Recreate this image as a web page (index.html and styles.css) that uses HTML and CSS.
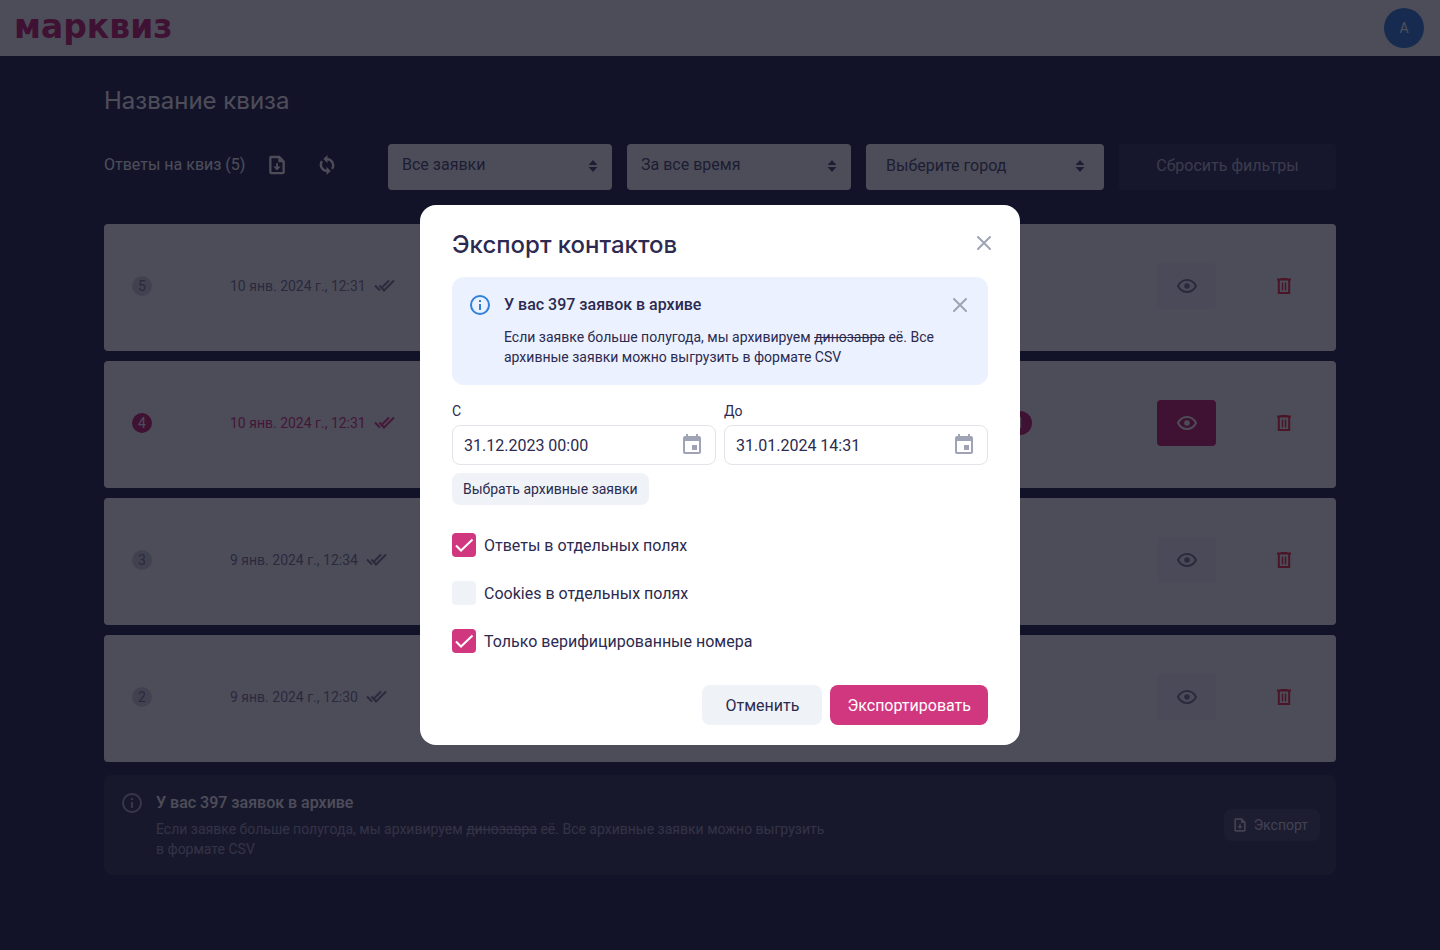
FILE: index.html
```html
<!DOCTYPE html>
<html lang="ru">
<head>
    <meta charset="UTF-8">
    <meta name="viewport" content="width=device-width, initial-scale=1.0">
    <title>Экспорт контактов</title>
    <link rel="stylesheet" href="styles.css">
</head>
<body>
    <!-- icons -->
    <svg class="sprite" aria-hidden="true">
        <symbol id="i-file" viewBox="0 0 24 24"><path fill="currentColor" fill-rule="evenodd" d="M5.500 2H15l5.500 5.500V20a2 2 0 0 1-2 2h-13a2 2 0 0 1-2-2V4a2 2 0 0 1 2-2zm.5 2.500v15h12V9h-4.500V4.500zm5 5.500h2v3.500h3L12 18l-4-4.500h3z"/></symbol>
        <symbol id="i-sync" viewBox="0 0 24 24"><path fill="none" stroke="currentColor" stroke-width="2.500" d="M12 5.500a6.800 6.800 0 0 1 5.500 10.700M12 18.500A6.800 6.800 0 0 1 6.500 7.800"/><path fill="currentColor" d="M12.500 1v9L8 5.500zM11.500 23v-9l4.500 4.500z"/></symbol>
        <symbol id="i-sort" viewBox="0 0 10 14"><path fill="currentColor" d="M5 1l4.500 5h-9zM5 13L.5 8h9z"/></symbol>
        <symbol id="i-checks" viewBox="0 0 21 13"><path fill="none" stroke="currentColor" stroke-width="2" d="M1 6.500l5 5M5.500 6.500l4.500 5L20 1.500M8.500 8l6.500-6.500"/></symbol>
        <symbol id="i-eye" viewBox="0 0 20 14"><path fill="none" stroke="currentColor" stroke-width="2" d="M1 7c2-4 5.300-6 9-6s7 2 9 6c-2 4-5.300 6-9 6S3 11 1 7z"/><circle cx="10" cy="7" r="2.800" fill="currentColor"/></symbol>
        <symbol id="i-trash" viewBox="0 0 16 18"><path fill="none" stroke="currentColor" stroke-width="2" d="M1 2.500h14M2.800 2.500V16h10.400V2.500"/><path fill="none" stroke="currentColor" stroke-width="1.500" d="M6.500 5.500v8M9.500 5.500v8"/><path fill="currentColor" d="M4.500 1h7v1h-7z"/></symbol>
        <symbol id="i-info" viewBox="0 0 24 24"><circle cx="12" cy="12" r="9" fill="none" stroke="currentColor" stroke-width="2"/><path fill="currentColor" d="M11 7h2v2h-2zM11 11h2v6h-2z"/></symbol>
        <symbol id="i-close" viewBox="0 0 24 24"><path fill="none" stroke="currentColor" stroke-width="2" stroke-linecap="round" d="M6 6l12 12M18 6L6 18"/></symbol>
        <symbol id="i-calendar" viewBox="0 0 24 24"><path fill="currentColor" fill-rule="evenodd" d="M6 1h2v2h8V1h2v2h1a2 2 0 0 1 2 2v14a2 2 0 0 1-2 2H5a2 2 0 0 1-2-2V5a2 2 0 0 1 2-2h1zM5 8v11h14V8zM12 12h5v5h-5z"/></symbol>
        <symbol id="i-check" viewBox="0 0 24 24"><path fill="none" stroke="currentColor" stroke-width="2" d="M4 12.500l5 5L20.500 6.500"/></symbol>
    </svg>

    <header class="topbar">
        <a class="logo" href="#">марквиз</a>
        <button class="avatar" type="button">A</button>
    </header>

    <main class="page">
        <h1 class="page-title">Название квиза</h1>

        <div class="filters">
            <div class="filters-head">
                <span>Ответы на квиз (5)</span>
                <button class="icon-btn" type="button" aria-label="Экспорт"><svg width="22" height="22"><use href="#i-file"/></svg></button>
                <button class="icon-btn" type="button" aria-label="Обновить"><svg width="22" height="22"><use href="#i-sync"/></svg></button>
            </div>
            <div class="select">
                <select aria-label="Заявки"><option>Все заявки</option></select>
                <svg width="10" height="14"><use href="#i-sort"/></svg>
            </div>
            <div class="select">
                <select aria-label="Период"><option>За все время</option></select>
                <svg width="10" height="14"><use href="#i-sort"/></svg>
            </div>
            <div class="select select-city">
                <select aria-label="Город"><option>Выберите город</option></select>
                <svg width="10" height="14"><use href="#i-sort"/></svg>
            </div>
            <button class="reset" type="button">Сбросить фильтры</button>
        </div>

        <div class="leads">
            <article class="lead">
                <span class="badge">5</span>
                <span class="date">10 янв. 2024 г., 12:31 <svg width="21" height="13"><use href="#i-checks"/></svg></span>
                <button class="view" type="button" aria-label="Посмотреть"><svg width="20" height="14"><use href="#i-eye"/></svg></button>
                <button class="icon-btn delete" type="button" aria-label="Удалить"><svg width="16" height="18"><use href="#i-trash"/></svg></button>
            </article>
            <article class="lead lead-new">
                <span class="badge">4</span>
                <span class="date">10 янв. 2024 г., 12:31 <svg width="21" height="13"><use href="#i-checks"/></svg></span>
                <span class="count">1</span>
                <button class="view" type="button" aria-label="Посмотреть"><svg width="20" height="14"><use href="#i-eye"/></svg></button>
                <button class="icon-btn delete" type="button" aria-label="Удалить"><svg width="16" height="18"><use href="#i-trash"/></svg></button>
            </article>
            <article class="lead">
                <span class="badge">3</span>
                <span class="date">9 янв. 2024 г., 12:34 <svg width="21" height="13"><use href="#i-checks"/></svg></span>
                <button class="view" type="button" aria-label="Посмотреть"><svg width="20" height="14"><use href="#i-eye"/></svg></button>
                <button class="icon-btn delete" type="button" aria-label="Удалить"><svg width="16" height="18"><use href="#i-trash"/></svg></button>
            </article>
            <article class="lead">
                <span class="badge">2</span>
                <span class="date">9 янв. 2024 г., 12:30 <svg width="21" height="13"><use href="#i-checks"/></svg></span>
                <button class="view" type="button" aria-label="Посмотреть"><svg width="20" height="14"><use href="#i-eye"/></svg></button>
                <button class="icon-btn delete" type="button" aria-label="Удалить"><svg width="16" height="18"><use href="#i-trash"/></svg></button>
            </article>
        </div>

        <section class="archive">
            <svg class="archive-icon" width="24" height="24"><use href="#i-info"/></svg>
            <div class="archive-body">
                <h2>У вас 397 заявок в архиве</h2>
                <p>Если заявке больше полугода, мы архивируем <s>динозавра</s> её. Все архивные заявки можно выгрузить в&nbsp;формате&nbsp;CSV</p>
            </div>
            <button class="archive-export" type="button"><svg width="16" height="16"><use href="#i-file"/></svg>Экспорт</button>
        </section>
    </main>

    <div class="overlay">
        <form class="modal" role="dialog" aria-labelledby="modal-title">
            <div class="modal-head">
                <h2 id="modal-title">Экспорт контактов</h2>
                <button class="icon-btn close" type="button" aria-label="Закрыть"><svg width="24" height="24"><use href="#i-close"/></svg></button>
            </div>

            <div class="notice">
                <svg class="notice-icon" width="24" height="24"><use href="#i-info"/></svg>
                <div class="notice-body">
                    <h3>У вас 397 заявок в архиве</h3>
                    <p>Если заявке больше полугода, мы архивируем <s>динозавра</s> её. Все архивные заявки можно выгрузить в формате CSV</p>
                </div>
                <button class="icon-btn" type="button" aria-label="Скрыть"><svg width="24" height="24"><use href="#i-close"/></svg></button>
            </div>

            <div class="dates">
                <div class="field">
                    <label for="date-from">С</label>
                    <div class="date-input">
                        <input type="text" id="date-from" value="31.12.2023 00:00">
                        <svg width="24" height="24"><use href="#i-calendar"/></svg>
                    </div>
                </div>
                <div class="field">
                    <label for="date-to">До</label>
                    <div class="date-input">
                        <input type="text" id="date-to" value="31.01.2024 14:31">
                        <svg width="24" height="24"><use href="#i-calendar"/></svg>
                    </div>
                </div>
            </div>
            <button class="btn-small" type="button">Выбрать архивные заявки</button>

            <div class="checks">
                <label class="check">
                    <input type="checkbox" checked>
                    <svg width="24" height="24"><use href="#i-check"/></svg>
                    Ответы в отдельных полях
                </label>
                <label class="check">
                    <input type="checkbox">
                    <svg width="24" height="24"><use href="#i-check"/></svg>
                    Cookies в отдельных полях
                </label>
                <label class="check">
                    <input type="checkbox" checked>
                    <svg width="24" height="24"><use href="#i-check"/></svg>
                    Только верифицированные номера
                </label>
            </div>

            <div class="actions">
                <button class="btn" type="button">Отменить</button>
                <button class="btn btn-primary" type="submit">Экспортировать</button>
            </div>
        </form>
    </div>
</body>
</html>
```

FILE: styles.css
```css
* {
    box-sizing: border-box;
}
body {
    margin: 0;
    min-height: 100vh;
    font-family: Roboto, sans-serif;
    font-size: 16px;
    line-height: 24px;
    color: #2c2a50;
    background-color: #3b3b5c;
}
h1, h2, h3, p {
    margin: 0;
    font-weight: 500;
}
p {
    font-weight: 400;
}
svg {
    display: block;
    flex: none;
}
button, input, select {
    font: inherit;
    color: inherit;
}
button {
    padding: 0;
    border: none;
    background: none;
    cursor: pointer;
}
.sprite {
    position: absolute;
    width: 0;
    height: 0;
}
.icon-btn {
    flex: none;
}

/* top bar */
.topbar {
    display: flex;
    align-items: center;
    justify-content: space-between;
    height: 56px;
    padding: 0 16px 0 14px;
    background-color: #fff;
}
.logo {
    padding-bottom: 2px;
    font-family: "DejaVu Sans", sans-serif;
    font-size: 33px;
    font-weight: bold;
    line-height: 40px;
    color: #d1377f;
    text-decoration: none;
}
.avatar {
    width: 40px;
    height: 40px;
    border-radius: 50%;
    font-size: 14px;
    color: #fff;
    background-color: #4a8ee0;
}

/* page */
.page {
    max-width: 1264px;
    margin: 0 auto;
    padding: 29px 16px;
}
.page-title {
    font-family: Inter, sans-serif;
    font-size: 24px;
    font-weight: 400;
    line-height: 32px;
    color: #fff;
}
.filters {
    display: grid;
    grid-template-columns: 269px 224fr 224fr 238fr 217fr;
    gap: 15px;
    align-items: center;
    margin-top: 27px;
}
.filters-head {
    display: flex;
    align-items: center;
    padding-bottom: 4px;
    color: #fff;
}
.filters-head .icon-btn {
    margin-left: 21px;
}
.filters-head .icon-btn + .icon-btn {
    margin-left: 28px;
}
.select {
    position: relative;
    color: #615f80;
}
.select select {
    width: 100%;
    height: 46px;
    padding: 0 32px 4px 14px;
    border: none;
    border-radius: 4px;
    appearance: none;
    background-color: #fff;
}
.select svg {
    position: absolute;
    right: 14px;
    top: 15px;
    pointer-events: none;
}
.select-city select {
    padding: 0 32px 2px 20px;
}
.select-city svg {
    right: 19px;
}
.reset {
    height: 46px;
    padding-bottom: 2px;
    border-radius: 4px;
    color: #c4c4d2;
    background-color: #48486a;
}

/* leads */
.leads {
    display: flex;
    flex-direction: column;
    gap: 10px;
    margin-top: 34px;
}
.lead {
    display: flex;
    align-items: center;
    height: 127px;
    padding: 0 44px 4px 28px;
    border-radius: 4px;
    font-size: 14px;
    color: #8a88a0;
    background-color: #fff;
}
.badge {
    width: 20px;
    height: 20px;
    margin-right: 78px;
    border-radius: 50%;
    line-height: 20px;
    text-align: center;
    background-color: #d8d8e0;
}
.date {
    display: flex;
    align-items: center;
    gap: 8px;
    margin-right: auto;
}
.count {
    width: 24px;
    margin-right: 125px;
    border-radius: 50%;
    text-align: center;
    color: #fff;
    background-color: #d1377f;
}
.view {
    display: flex;
    align-items: center;
    justify-content: center;
    width: 59px;
    height: 46px;
    border-radius: 4px;
    background-color: #f6f6fa;
}
.delete {
    margin-left: 60px;
    color: #f04458;
}
.lead-new {
    color: #e04a90;
}
.lead-new .badge, .lead-new .view {
    color: #fff;
    background-color: #d1377f;
}

/* archive block under the list */
.archive {
    display: flex;
    margin-top: 13px;
    padding: 16px;
    border-radius: 8px;
    color: #fff;
    background-color: #4d4d6c;
}
.archive-icon {
    margin: 0 12px 0 0;
    color: #b4b4c4;
}
.archive-body {
    max-width: 680px;
    margin-right: auto;
}
.archive h2 {
    font-size: 16px;
}
.archive p {
    margin-top: 4px;
    font-size: 14px;
    line-height: 20px;
    color: #a8a8bc;
}
.archive-export {
    display: flex;
    align-items: center;
    align-self: center;
    gap: 6px;
    height: 32px;
    padding: 0 12px 0 8px;
    border-radius: 8px;
    font-size: 14px;
    color: #d8d8e0;
    background-color: #5f5f7b;
}

/* modal */
.overlay {
    position: fixed;
    inset: 0;
    display: flex;
    align-items: center;
    justify-content: center;
    background-color: rgba(2, 1, 18, 0.7);
}
.modal {
    width: 600px;
    padding: 24px 32px 20px;
    border-radius: 16px;
    background-color: #fff;
}
.modal-head {
    display: flex;
    justify-content: space-between;
    align-items: flex-start;
    margin-bottom: 16px;
}
.modal-head h2 {
    font-family: Inter, sans-serif;
    font-size: 24px;
    line-height: 32px;
}
.modal .icon-btn {
    color: #9ea3b5;
}
.close {
    margin: 2px -8px 0 0;
}
.notice {
    display: flex;
    align-items: flex-start;
    gap: 12px;
    padding: 16px 16px 18px;
    border-radius: 12px;
    background-color: #ebf1ff;
}
.notice-icon {
    color: #2f80dc;
}
.notice-body {
    flex: 1;
}
.notice h3 {
    font-size: 16px;
}
.notice p {
    margin-top: 10px;
    font-size: 14px;
    line-height: 20px;
}
.dates {
    display: flex;
    gap: 8px;
    margin: 16px 0 8px;
}
.field {
    flex: 1;
}
.field label {
    display: block;
    margin-bottom: 4px;
    font-size: 14px;
    line-height: 20px;
}
.date-input {
    position: relative;
}
.date-input input {
    display: block;
    width: 100%;
    height: 40px;
    padding: 0 40px 0 11px;
    border: 1px solid #e3e4ea;
    border-radius: 8px;
    background-color: #fff;
}
.date-input svg {
    position: absolute;
    right: 12px;
    top: 8px;
    color: #9ea3b5;
    pointer-events: none;
}
.btn-small {
    height: 32px;
    padding: 0 11px;
    border-radius: 8px;
    font-size: 14px;
    background-color: #eff3f7;
}
.checks {
    display: flex;
    flex-direction: column;
    align-items: flex-start;
    gap: 24px;
    margin: 28px 0 32px;
}
.check {
    position: relative;
    display: flex;
    gap: 8px;
    line-height: 26px;
    height: 24px;
    cursor: pointer;
}
.check input {
    width: 24px;
    height: 24px;
    margin: 0;
    border-radius: 4px;
    appearance: none;
    background-color: #eff3f7;
}
.check input:checked {
    background-color: #d1377f;
}
.check svg {
    position: absolute;
    left: 0;
    top: 0;
    display: none;
    color: #fff;
}
.check input:checked + svg {
    display: block;
}
.actions {
    display: flex;
    justify-content: flex-end;
    gap: 8px;
}
.btn {
    min-width: 120px;
    height: 40px;
    padding: 1px 17px 0;
    border-radius: 8px;
    background-color: #eff3f7;
}
.btn-primary {
    color: #fff;
    background-color: #d1377f;
}
```
